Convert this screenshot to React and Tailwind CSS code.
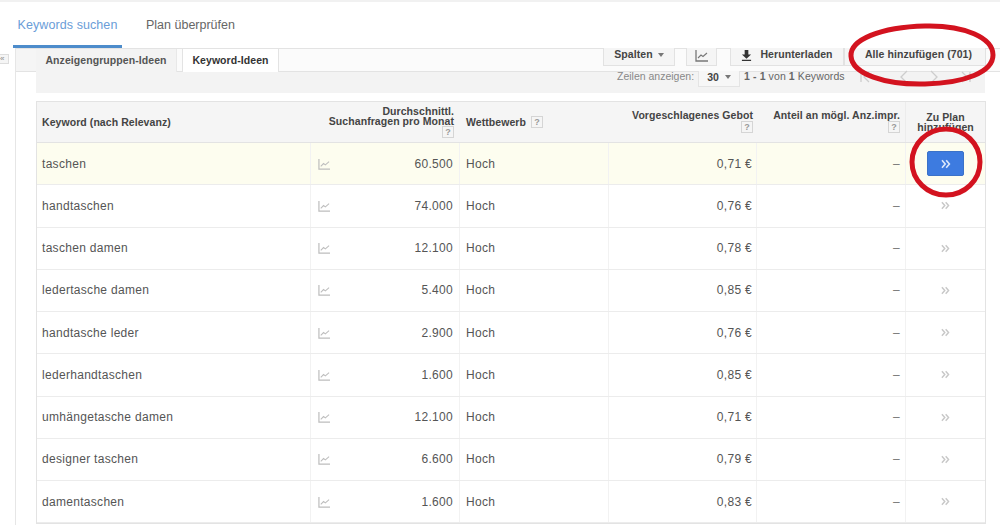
import React from 'react'

const rows = [
  ['taschen', '60.500', '0,71 €'],
  ['handtaschen', '74.000', '0,76 €'],
  ['taschen damen', '12.100', '0,78 €'],
  ['ledertasche damen', '5.400', '0,85 €'],
  ['handtasche leder', '2.900', '0,76 €'],
  ['lederhandtaschen', '1.600', '0,85 €'],
  ['umhängetasche damen', '12.100', '0,71 €'],
  ['designer taschen', '6.600', '0,79 €'],
  ['damentaschen', '1.600', '0,83 €'],
]

const ChartIcon = ({ className }) => (
  <svg viewBox="0 0 13 13" className={className} fill="none" stroke="currentColor">
    <path d="M1 1v11h12" strokeWidth="1.3" />
    <path d="M3 9l3-3 2 1.5L12 4" strokeWidth="1.1" />
  </svg>
)

const Help = () => (
  <span className="inline-flex w-[12px] h-[12px] items-center justify-center border border-[#d5d5d5] bg-[#f5f5f5] text-[9px] leading-none font-bold text-[#999]">?</span>
)

const DoubleArrow = ({ className }) => (
  <svg viewBox="0 0 10 9" className={className} fill="none" stroke="currentColor" strokeWidth="1.6">
    <path d="M1 .8l3.2 3.7L1 8.2M5.2 .8l3.2 3.7-3.2 3.7" />
  </svg>
)

const Chevron = ({ d, className }) => (
  <svg viewBox="0 0 12 14" className={`w-[12px] h-[14px] text-[#cdcdcd] ${className}`} fill="none" stroke="currentColor" strokeWidth="1.3">
    <path d={d} />
  </svg>
)

const ToolButton = ({ className, children }) => (
  <div className={`h-[18px] pb-[3px] flex items-center justify-center bg-[#f5f5f5] border-b border-x border-[#e2e2e2] text-[10.5px] font-bold tracking-[0.07px] text-[#444] ${className}`}>
    {children}
  </div>
)

export default function App() {
  return (
    <div className="relative w-[1000px] h-[525px] overflow-hidden bg-white font-['Liberation_Sans',Arial,sans-serif]">
      <div className="h-[2px] bg-[#f1f1f1]" />

      <div className="h-[46px] flex items-start pl-[13px]">
        <div className="w-[109px] h-[46px] border-b-[3px] border-[#4d8ccb] pt-[16px] text-center text-[12.5px] leading-[15px] tracking-[0.08px] text-[#6a9dd8]">
          Keywords suchen
        </div>
        <div className="ml-[24px] pt-[16px] text-[12.5px] leading-[15px] text-[#666]">Plan überprüfen</div>
      </div>

      <div className="flex">
        <div className="w-[16px] shrink-0 h-[477px] border-r border-[#e6e6e6] pt-[6px]">
          <div className="w-[9px] h-[10px] border border-l-0 border-[#ddd] bg-[#f5f5f5] text-[8px] leading-[8px] text-[#888]">«</div>
        </div>

        <div className="flex-1 min-w-0">
          <div className="h-[24px] flex border-y border-[#e3e3e3] bg-[#fbfbfb]">
            <div className="w-[20px] bg-[#f5f5f5]" />
            <div className="w-[141px] h-[23px] flex items-center justify-center bg-[#f3f3f3] border-r border-[#e8e8e8] text-[10.5px] font-bold tracking-[0.07px] text-[#555]">
              Anzeigengruppen-Ideen
            </div>
            <div className="ml-[5px] w-[97px] h-[23px] flex items-center justify-center bg-white border-x border-[#e3e3e3] text-[10.5px] font-bold tracking-[0.07px] text-[#333]">
              Keyword-Ideen
            </div>
            <div className="ml-[324px] flex -mt-[1px] h-[18px]">
              <ToolButton className="w-[72px] gap-[5px]">
                Spalten
                <span className="w-0 h-0 border-x-[3.5px] border-x-transparent border-t-[4px] border-t-[#777]" />
              </ToolButton>
              <ToolButton className="w-[31px] ml-[11px]"><ChartIcon className="w-[13px] h-[13px] text-[#777]" /></ToolButton>
              <ToolButton className="w-[114px] ml-[13px] gap-[8px]">
                <svg viewBox="0 0 12 12" className="w-[11px] h-[11px] text-[#333]" fill="currentColor"><path d="M4 0h4v5h3L6 9.5 1 5h3zM1 10.5h10V12H1z" /></svg>
                Herunterladen
              </ToolButton>
              <ToolButton className="w-[142px] pl-[7px]">Alle hinzufügen (701)</ToolButton>
            </div>
          </div>

          <div className="ml-[20px] w-[949px] h-[21px] flex items-start bg-[#f3f3f3] text-[10.5px] leading-[14px] text-[#888]">
            <span className="ml-[581px] -mt-[3px]">Zeilen anzeigen:</span>
            <div className="ml-[4px] -mt-[1px] w-[42px] h-[16px] pb-[3px] flex items-center justify-center gap-[6px] bg-[#f7f7f7] border-x border-b border-[#e4e4e4] font-bold text-[#444]">
              30
              <span className="w-0 h-0 border-x-[3.5px] border-x-transparent border-t-[4px] border-t-[#777]" />
            </div>
            <span className="ml-[4px] -mt-[3px] tracking-[0.1px] text-[#666]"><b>1 - 1</b> von <b>1</b> Keywords</span>
            <div className="ml-[14px] -mt-[2px] flex">
              <Chevron d="M2 2v10M10 2L5 7l5 5" />
              <Chevron className="ml-[27px]" d="M9 1L3 7l6 6" />
              <Chevron className="ml-[18px]" d="M3 1l6 6-6 6" />
              <Chevron className="ml-[20px]" d="M2 2l5 5-5 5M10 2v10" />
            </div>
          </div>

          <div className="ml-[20px] mt-[8px] w-[950px] border border-[#e3e3e3]">
            <div className="h-[41px] grid grid-cols-[273px_150px_148px_149px_148px_80px] bg-[#f5f5f5] border-b border-[#e3e3e3] text-[10.5px] leading-[10px] font-bold tracking-[0.07px] text-[#444]">
              <div className="flex items-center pl-[5px]">Keyword (nach Relevanz)</div>
              <div className="flex flex-col items-end pt-[4px] pr-[6px]">
                <span>Durchschnittl.</span>
                <span>Suchanfragen pro Monat</span>
                <span className="flex"><Help /></span>
              </div>
              <div className="flex items-center gap-[5px] pl-[6px]">Wettbewerb <Help /></div>
              <div className="flex flex-col items-end pt-[8px] pr-[4px]">
                <span>Vorgeschlagenes Gebot</span>
                <span className="flex mt-[1px]"><Help /></span>
              </div>
              <div className="flex flex-col items-end pt-[8px] pr-[5px]">
                <span>Anteil an mögl. Anz.impr.</span>
                <span className="flex mt-[1px]"><Help /></span>
              </div>
              <div className="flex flex-col items-center pt-[10px] border-l border-[#ececec]">
                <span>Zu Plan</span>
                <span>hinzufügen</span>
              </div>
            </div>

            {rows.map((row, i) => (
              <div
                key={row[0]}
                className={`h-[42.25px] grid grid-cols-[273px_150px_148px_149px_148px_80px] items-stretch border-b border-[#ececec] text-[12px] tracking-[0.3px] text-[#555] ${i === 0 ? 'bg-[#fdfdef]' : 'bg-white'}`}
              >
                <div className="flex items-center pl-[5px]">{row[0]}</div>
                <div className="flex items-center justify-between pl-[7px] pr-[6px] border-x border-[#f2f2f2]">
                  <ChartIcon className="w-[12px] h-[12px] text-[#bdbdbd]" />
                  {row[1]}
                </div>
                <div className="flex items-center pl-[6px]">Hoch</div>
                <div className="flex items-center justify-end pr-[4px] border-x border-[#f2f2f2]">{row[2]}</div>
                <div className="flex items-center justify-end pr-[5px] text-[#777]">–</div>
                <div className="flex items-center justify-center border-l border-[#f2f2f2]">
                  {i === 0 ? (
                    <div className="w-[37px] h-[25px] flex items-center justify-center rounded-[2px] bg-[#3d7be0] border border-[#3b72c8]">
                      <DoubleArrow className="w-[10px] h-[10px] text-[#dce9fb]" />
                    </div>
                  ) : (
                    <DoubleArrow className="w-[9px] h-[9px] text-[#c8c8c8]" />
                  )}
                </div>
              </div>
            ))}
          </div>
        </div>
      </div>

      {/* red marker circles lie over the page */}
      <svg className="absolute inset-0 pointer-events-none" width="1000" height="525" fill="none" stroke="#d3131f" strokeWidth="5">
        <path d="M851 56C850 40 880 27 925 26 965 25 993 38 993 55 993 72 965 83 925 84 885 85 852 74 851 56Z" />
        <ellipse cx="946" cy="162" rx="34" ry="33" />
      </svg>
    </div>
  )
}
